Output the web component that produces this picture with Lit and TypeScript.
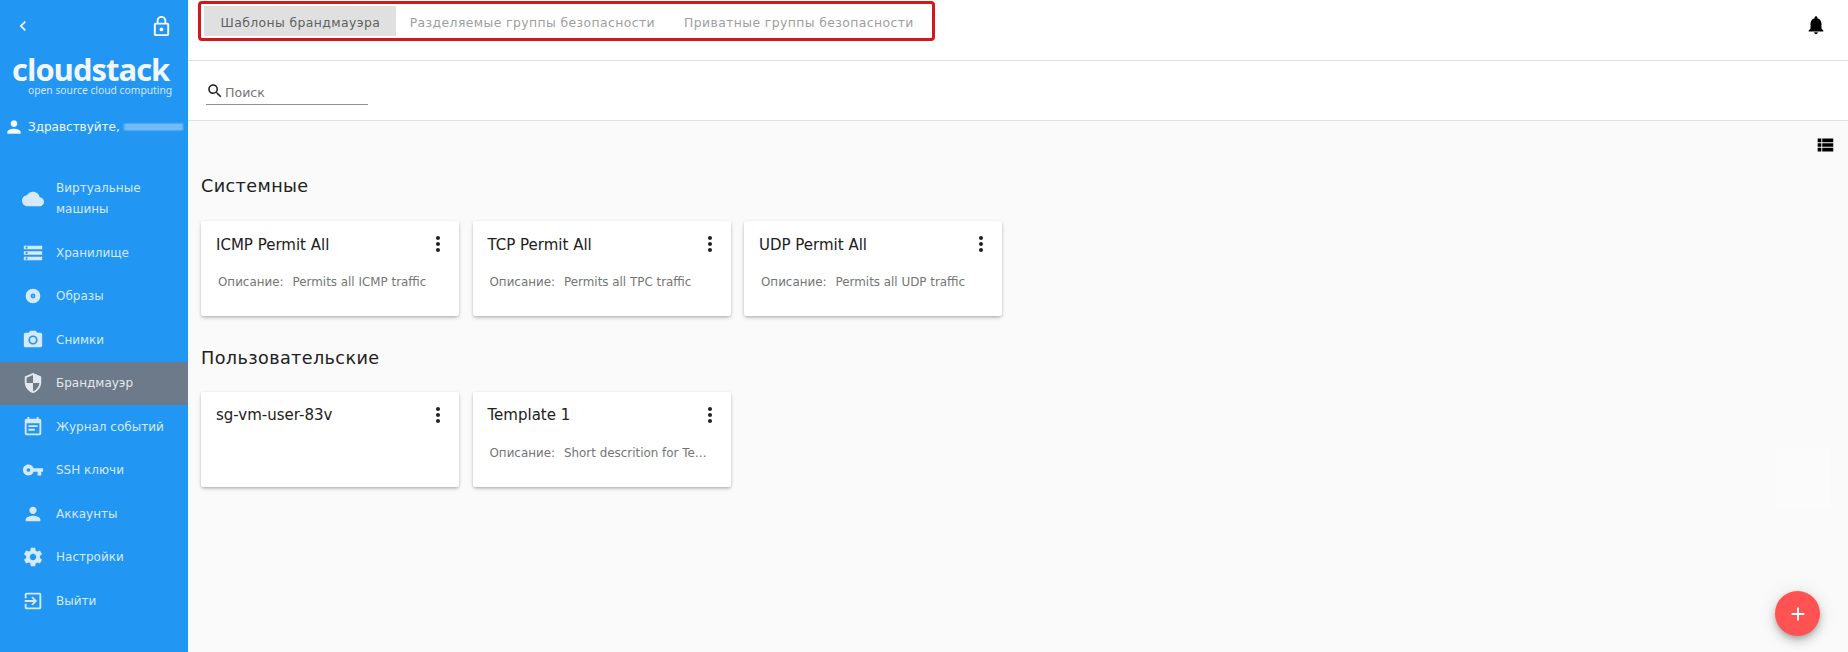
import { LitElement, html, css, svg } from "lit";
import { customElement } from "lit/decorators.js";

const ICONS: Record<string, string> = {
  back: "M15.41 7.41L14 6l-6 6 6 6 1.41-1.41L10.83 12z",
  lock: "M12 17c1.1 0 2-.9 2-2s-.9-2-2-2-2 .9-2 2 .9 2 2 2zm6-9h-1V6c0-2.76-2.24-5-5-5S7 3.24 7 6v2H6c-1.1 0-2 .9-2 2v10c0 1.1.9 2 2 2h12c1.1 0 2-.9 2-2V10c0-1.1-.9-2-2-2zM8.9 6c0-1.71 1.39-3.1 3.1-3.1s3.1 1.39 3.1 3.1v2H8.9V6zM18 20H6V10h12v10z",
  person: "M12 12c2.21 0 4-1.79 4-4s-1.79-4-4-4-4 1.79-4 4 1.79 4 4 4zm0 2c-2.67 0-8 1.34-8 4v2h16v-2c0-2.66-5.33-4-8-4z",
  cloud: "M19.35 10.04C18.67 6.59 15.64 4 12 4 9.11 4 6.6 5.64 5.35 8.04 2.34 8.36 0 10.91 0 14c0 3.31 2.69 6 6 6h13c2.76 0 5-2.24 5-5 0-2.64-2.05-4.78-4.65-4.96z",
  storage: "M2 20h20v-4H2v4zm2-3h2v2H4v-2zM2 4v4h20V4H2zm4 3H4V5h2v2zm-4 7h20v-4H2v4zm2-3h2v2H4v-2z",
  disc: "M12 4a8 8 0 1 0 0 16 8 8 0 0 0 0-16zm0 5.4a2.6 2.6 0 1 1 0 5.2 2.6 2.6 0 0 1 0-5.2zm0 1.9a.7.7 0 1 0 0 1.4.7.7 0 0 0 0-1.4z",
  camera: "M9 2L7.17 4H4c-1.1 0-2 .9-2 2v12c0 1.1.9 2 2 2h16c1.1 0 2-.9 2-2V6c0-1.1-.9-2-2-2h-3.17L15 2H9zm3 15c-2.76 0-5-2.24-5-5s2.24-5 5-5 5 2.24 5 5-2.24 5-5 5zm0-8.2a3.2 3.2 0 1 0 0 6.4 3.2 3.2 0 0 0 0-6.4z",
  shield: "M12 1L3 5v6c0 5.55 3.84 10.74 9 12 5.16-1.26 9-6.45 9-12V5l-9-4zm0 10.99h7c-.53 4.12-3.28 7.79-7 8.94V12H5V6.3l7-3.11v8.8z",
  event: "M17 10H7v2h10v-2zm2-7h-1V1h-2v2H8V1H6v2H5c-1.11 0-1.99.9-1.99 2L3 19c0 1.1.89 2 2 2h14c1.1 0 2-.9 2-2V5c0-1.1-.9-2-2-2zm0 16H5V8h14v11zm-5-5H7v2h7v-2z",
  key: "M12.65 10C11.83 7.67 9.61 6 7 6c-3.31 0-6 2.69-6 6s2.69 6 6 6c2.61 0 4.83-1.67 5.65-4H17v4h4v-4h2v-4H12.65zM7 14c-1.1 0-2-.9-2-2s.9-2 2-2 2 .9 2 2-.9 2-2 2z",
  settings: "M19.43 12.98c.04-.32.07-.64.07-.98s-.03-.66-.07-.98l2.11-1.65c.19-.15.24-.42.12-.64l-2-3.46c-.12-.22-.39-.3-.61-.22l-2.49 1c-.52-.4-1.08-.73-1.69-.98l-.38-2.65C14.46 2.18 14.25 2 14 2h-4c-.25 0-.46.18-.49.42l-.38 2.65c-.61.25-1.17.59-1.69.98l-2.49-1c-.23-.09-.49 0-.61.22l-2 3.46c-.13.22-.07.49.12.64l2.11 1.65c-.04.32-.07.65-.07.98s.03.66.07.98l-2.11 1.65c-.19.15-.24.42-.12.64l2 3.46c.12.22.39.3.61.22l2.49-1c.52.4 1.08.73 1.69.98l.38 2.65c.03.24.24.42.49.42h4c.25 0 .46-.18.49-.42l.38-2.65c.61-.25 1.17-.59 1.69-.98l2.49 1c.23.09.49 0 .61-.22l2-3.46c.12-.22.07-.49-.12-.64l-2.11-1.65zM12 15.5c-1.93 0-3.5-1.57-3.5-3.5s1.57-3.5 3.5-3.5 3.5 1.57 3.5 3.5-1.57 3.5-3.5 3.5z",
  exit: "M10.09 15.59L11.5 17l5-5-5-5-1.41 1.41L12.67 11H3v2h9.67l-2.58 2.59zM19 3H5c-1.11 0-2 .9-2 2v4h2V5h14v14H5v-4H3v4c0 1.1.89 2 2 2h14c1.1 0 2-.9 2-2V5c0-1.1-.9-2-2-2z",
  search: "M15.5 14h-.79l-.28-.27C15.41 12.59 16 11.11 16 9.5 16 5.91 13.09 3 9.5 3S3 5.91 3 9.5 5.91 16 9.5 16c1.61 0 3.09-.59 4.23-1.57l.27.28v.79l5 4.99L20.49 19l-4.99-5zm-6 0C7.01 14 5 11.99 5 9.5S7.01 5 9.5 5 14 7.01 14 9.5 11.99 14 9.5 14z",
  bell: "M12 22c1.1 0 2-.9 2-2h-4c0 1.1.89 2 2 2zm6-6v-5c0-3.07-1.64-5.64-4.5-6.32V4c0-.83-.67-1.5-1.5-1.5s-1.5.67-1.5 1.5v.68C7.63 5.36 6 7.92 6 11v5l-2 2v1h16v-1l-2-2z",
  list: "M4 14h4v-4H4v4zm0 5h4v-4H4v4zM4 9h4V5H4v4zm5 5h12v-4H9v4zm0 5h12v-4H9v4zM9 5v4h12V5H9z",
  more: "M12 8c1.1 0 2-.9 2-2s-.9-2-2-2-2 .9-2 2 .9 2 2 2zm0 2c-1.1 0-2 .9-2 2s.9 2 2 2 2-.9 2-2-.9-2-2-2zm0 6c-1.1 0-2 .9-2 2s.9 2 2 2 2-.9 2-2-.9-2-2-2z",
  add: "M19 13h-6v6h-2v-6H5v-2h6V5h2v6h6v2z",
};

const icon = (name: string, size = 22) => html`<svg class="ic" width=${size} height=${size} viewBox="0 0 24 24" fill="currentColor" fill-rule="evenodd">${svg`<path d=${ICONS[name]}></path>`}</svg>`;

const NAV: { icon: string; label: string; active?: boolean; tall?: boolean }[] = [
  { icon: "cloud", label: "Виртуальные машины", tall: true },
  { icon: "storage", label: "Хранилище" },
  { icon: "disc", label: "Образы" },
  { icon: "camera", label: "Снимки" },
  { icon: "shield", label: "Брандмауэр", active: true },
  { icon: "event", label: "Журнал событий" },
  { icon: "key", label: "SSH ключи" },
  { icon: "person", label: "Аккаунты" },
  { icon: "settings", label: "Настройки" },
  { icon: "exit", label: "Выйти" },
];

const SYSTEM = [
  { t: "ICMP Permit All", d: "Permits all ICMP traffic" },
  { t: "TCP Permit All", d: "Permits all TPC traffic" },
  { t: "UDP Permit All", d: "Permits all UDP traffic" },
];
const USER = [
  { t: "sg-vm-user-83v", d: "" },
  { t: "Template 1", d: "Short descrition for Template 1" },
];

@customElement("app-root")
export class AppRoot extends LitElement {
  static styles = css`
    :host { display: flex; width: 1848px; height: 652px; overflow: hidden; position: relative; font-family: "DejaVu Sans", sans-serif; background: #fafafa; }
    * { box-sizing: border-box; }
    .ic { display: block; flex: none; }

    .side { width: 188px; flex: none; background: #2196f3; color: #fff; display: flex; flex-direction: column; }
    .side-top { display: flex; justify-content: space-between; align-items: center; height: 52px; padding: 0 15px 0 13px; }
    .logo { display: flex; flex-direction: column; align-items: flex-start; padding-left: 12px; height: 47px; margin-top: 2px; }
    .logo-main { font: 700 31px/30px "Open Sans", sans-serif; letter-spacing: -1px; color: #f2f6fa; }
    .logo-sub { font: 400 10.3px/12px "Noto Sans", sans-serif; color: #cfe6fb; margin: 0 0 0 16px; white-space: nowrap; }
    .hello { display: flex; align-items: center; padding-left: 4px; margin-top: 14px; height: 24px; font-size: 12px; white-space: nowrap; gap: 4px; color: #f1f8fe; }
    .blur { width: 59px; height: 6px; flex: none; filter: blur(.8px); opacity: .8; background: repeating-linear-gradient(0deg, #bfdcf8 0 2px, #5db2f6 2px 4px); }
    .nav { display: flex; flex-direction: column; margin-top: 28px; }
    .item { display: flex; align-items: center; height: 43.5px; padding-left: 22px; gap: 12px; color: #d6e9fb; font-size: 12px; }
    .item.tall { height: 64px; line-height: 21.5px; }
    .item.tall span { width: 90px; }
    .item.active { background: #6c7a89; color: #e2e8ee; }

    .main { flex: 1; min-width: 0; display: flex; flex-direction: column; position: relative; }
    .topbar { height: 61px; flex: none; background: #fff; border-bottom: 1px solid #e0e0e0; display: flex; justify-content: space-between; padding: 1px 21px 0 10px; }
    .tabs { display: flex; align-items: stretch; width: 737px; height: 40px; padding: 2px 3px; border: 3px solid #d01a1a; border-radius: 4px; }
    .tab { padding: 2px 14.5px 0; display: flex; align-items: center; font-size: 12.4px; letter-spacing: .4px; color: #9e9e9e; white-space: nowrap; }
    .tab.on { background: #e0e0e0; color: #616161; padding: 2px 15.5px 0 16.5px; }
    .tab:nth-child(2) { padding-left: 14px; }
    .bell { color: #000; margin-top: 13px; }
    .searchbar { height: 60px; flex: none; background: #fff; border-bottom: 1px solid #e0e0e0; padding: 20px 0 0 18px; }
    .search { width: 162px; height: 24px; border-bottom: 1px solid #8f8f8f; display: flex; align-items: center; gap: 1px; color: #757575; font-size: 12.6px; }
    .search .ic { color: #212121; margin: -4px 0 0 0; }
    .content { flex: 1; padding: 0 13px; display: flex; flex-direction: column; position: relative; }
    .tools { display: flex; justify-content: flex-end; height: 52px; padding: 13px 0 0 0; margin-right: -1px; color: #000; }
    h2 { margin: 0; font-weight: 400; font-size: 17.6px; line-height: 26px; letter-spacing: .4px; color: #212121; height: 26px; }
    .grid { display: flex; gap: 13.5px; margin-top: 22px; margin-bottom: 28.5px; }
    .grid.user { margin-top: 21px; }
    .card { width: 258px; height: 95px; background: #fff; border-radius: 2px; box-shadow: 0 2px 4px -1px rgba(0,0,0,.25), 0 1px 3px rgba(0,0,0,.14); padding: 12px 9px 0 15px; display: flex; flex-direction: column; }
    .head { display: flex; justify-content: space-between; align-items: center; height: 23px; font-size: 15px; color: #212121; }
    .head .ic { color: #212121; margin-top: -1px; }
    .desc { margin: 19px 0 0 2px; font-size: 11.9px; color: #757575; display: flex; gap: 9px; white-space: nowrap; }
    .desc b { font-weight: 400; overflow: hidden; text-overflow: ellipsis; width: 145px; }
    .fab { position: absolute; right: 28px; bottom: 16px; width: 45px; height: 45px; border-radius: 50%; background: #ff5252; color: #fff; display: flex; align-items: center; justify-content: center; box-shadow: 0 3px 5px -1px rgba(0,0,0,.2), 0 6px 10px rgba(0,0,0,.14), 0 1px 18px rgba(0,0,0,.12); }
    .ghost { position: absolute; right: 18px; top: 327px; width: 55px; height: 60px; background: #fbfbfb; box-shadow: 0 0 4px rgba(0,0,0,.015); }
  `;

  private card(c: { t: string; d: string }) {
    return html`<div class="card">
      <div class="head"><span>${c.t}</span>${icon("more", 24)}</div>
      ${c.d ? html`<div class="desc"><span>Описание:</span><b>${c.d}</b></div>` : ""}
    </div>`;
  }

  render() {
    return html`
      <aside class="side">
        <div class="side-top">${icon("back", 20)}${icon("lock", 23)}</div>
        <div class="logo"><span class="logo-main">cloudstack</span><span class="logo-sub">open source cloud computing</span></div>
        <div class="hello">${icon("person", 20)}<span>Здравствуйте,</span><div class="blur"></div></div>
        <nav class="nav">
          ${NAV.map((n) => html`<div class="item ${n.active ? "active" : ""} ${n.tall ? "tall" : ""}">${icon(n.icon)}<span>${n.label}</span></div>`)}
        </nav>
      </aside>
      <main class="main">
        <div class="topbar">
          <div class="tabs">
            <div class="tab on">Шаблоны брандмауэра</div>
            <div class="tab">Разделяемые группы безопасности</div>
            <div class="tab">Приватные группы безопасности</div>
          </div>
          <div class="bell">${icon("bell")}</div>
        </div>
        <div class="searchbar"><div class="search">${icon("search", 18)}<span>Поиск</span></div></div>
        <div class="content">
          <div class="ghost"></div>
          <div class="tools">${icon("list")}</div>
          <h2>Системные</h2>
          <div class="grid">${SYSTEM.map((c) => this.card(c))}</div>
          <h2>Пользовательские</h2>
          <div class="grid user">${USER.map((c) => this.card(c))}</div>
          <div class="fab">${icon("add")}</div>
        </div>
      </main>
    `;
  }
}
